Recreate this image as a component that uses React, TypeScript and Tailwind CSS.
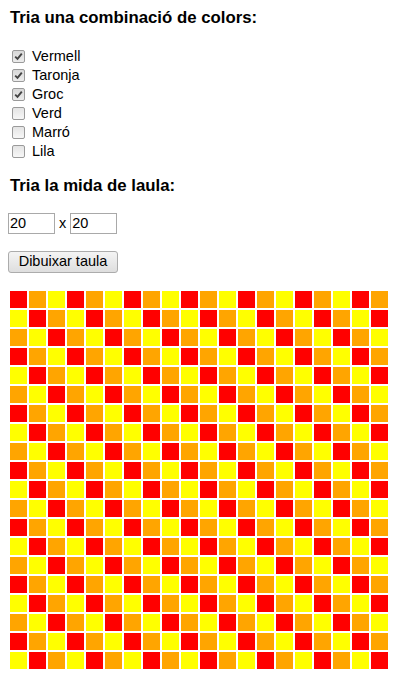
import React from "react";

const colorOptions = [
  { label: "Vermell", checked: true },
  { label: "Taronja", checked: true },
  { label: "Groc", checked: true },
  { label: "Verd", checked: false },
  { label: "Marró", checked: false },
  { label: "Lila", checked: false },
];

const cellColors = ["bg-[#ff0000]", "bg-[#ffa500]", "bg-[#ffff00]"];

function CheckBox({ checked }: { checked: boolean }) {
  return (
    <span
      className={`ml-[4px] mr-[3px] my-[3px] flex h-[13px] w-[13px] items-center justify-center rounded-[2px] border border-[#9a9a9a] bg-gradient-to-b ${
        checked ? "from-[#d8d8d8] to-[#ececec]" : "from-[#e4e4e4] to-[#f7f7f7]"
      }`}
    >
      {checked && (
        <svg width="9" height="9" viewBox="0 0 9 9">
          <path d="M1.2 4.6 L3.5 6.9 L7.8 1.6" fill="none" stroke="#444" strokeWidth="1.9" />
        </svg>
      )}
    </span>
  );
}

export default function App() {
  const cells = Array.from({ length: 400 }, (_, i) => i);
  return (
    <main className="min-h-[679px] bg-white px-2 pt-2 font-['Liberation_Sans',Arial,sans-serif] text-black">
      <h3 className="ml-[2px] text-[16.8px] leading-5 font-bold">Tria una combinació de colors:</h3>

      <div className="mt-[19px]">
        {colorOptions.map((opt) => (
          <label key={opt.label} className="flex h-[19px] items-center text-[14.5px] leading-[19px]">
            <CheckBox checked={opt.checked} />
            <span className="ml-[4px]">{opt.label}</span>
          </label>
        ))}
      </div>

      <h3 className="mt-[15px] ml-[2px] text-[16.8px] leading-5 font-bold">Tria la mida de laula:</h3>

      <div className="mt-[17px] flex items-center text-[14.5px]">
        <div className="h-[21px] w-[47px] border border-[#a9a9a9] pl-px leading-[19px]">20</div>
        <span className="mx-[4px]">x</span>
        <div className="h-[21px] w-[47px] border border-[#a9a9a9] pl-px leading-[19px]">20</div>
      </div>

      <button className="mt-[16px] flex h-[22px] w-[110px] items-center justify-center rounded-[3px] border border-[#acacac] bg-gradient-to-b from-[#f4f4f4] to-[#dedede] text-[14.5px]">
        Dibuixar taula
      </button>

      <div className="mt-[18px] ml-[2px] grid grid-cols-[repeat(20,17px)] gap-[2px]">
        {cells.map((i) => (
          <div key={i} className={`h-[17px] w-[17px] ${cellColors[i % 3]}`} />
        ))}
      </div>
    </main>
  );
}
